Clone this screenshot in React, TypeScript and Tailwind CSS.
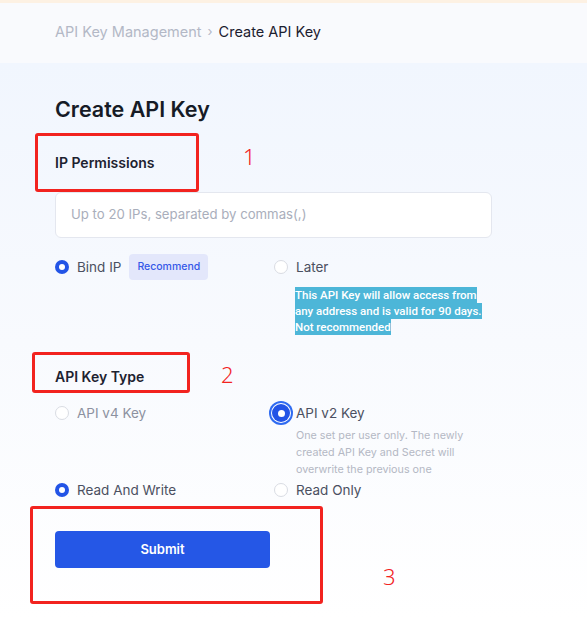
import React from "react";

const Radio = ({ checked, focus }: { checked?: boolean; focus?: boolean }) => (
  <span
    className={`relative flex items-center justify-center rounded-full shrink-0 ${
      focus ? "w-[18px] h-[18px] ring-2 ring-[#2f6bf1] ring-offset-[1px]" : "w-[14px] h-[14px]"
    } ${checked ? "bg-[#2354e6]" : "bg-white border border-[#d9dce3]"}`}
  >
    {checked && <span className={`rounded-full bg-white ${focus ? "w-[7px] h-[7px]" : "w-[6px] h-[6px]"}`} />}
  </span>
);

const Mark = ({ n, className }: { n: string; className: string }) => (
  <span className={`absolute text-[22px] leading-none text-[#f2231f] font-['Noto_Sans',sans-serif] font-light ${className}`}>
    {n}
  </span>
);

export default function App() {
  return (
    <div className="relative w-[587px] h-[618px] overflow-hidden bg-white font-['Inter',sans-serif]">
      <div className="h-[3px] bg-[#fdf1e3]" />
      <div className="h-[60px] bg-[#f9fafd] flex items-center pl-[55px] text-[14.5px] pb-[2px]">
        <span className="text-[#b3b8c6]">API Key Management</span>
        <span className="text-[#b3b8c6] mx-[6px] text-[13px]">›</span>
        <span className="text-[#1c2030]">Create API Key</span>
      </div>

      <div className="h-[555px] bg-gradient-to-b from-[#f1f6fe] via-[#f8fafe] to-white pl-[55px]">
        <h1 className="pt-[32px] text-[21.5px] font-semibold text-[#161b26] leading-[28px]">Create API Key</h1>

        <h2 className="mt-[30px] text-[14px] font-semibold text-[#1d2230] leading-[20px]">IP Permissions</h2>

        <div className="mt-[19px] w-[437px] h-[46px] rounded-[6px] border border-[#e4e7ef] bg-white flex items-center pl-[15px] text-[13.2px] text-[#a9aebb]">
          Up to 20 IPs, separated by commas(,)
        </div>

        <div className="mt-[16px] flex">
          <div className="w-[219px] flex items-start">
            <div className="flex items-center gap-[8px] h-[26px]">
              <Radio checked />
              <span className="text-[13.5px] text-[#4b5061]">Bind IP</span>
              <span className="h-[26px] px-[8px] flex items-center rounded-[4px] bg-[#e3e7fb] text-[#3458e8] text-[10.5px] font-medium">
                Recommend
              </span>
            </div>
          </div>
          <div>
            <div className="flex items-center gap-[8px] h-[26px]">
              <Radio />
              <span className="text-[13.5px] text-[#4b5061]">Later</span>
            </div>
            <div className="mt-[7px] ml-[21px] w-[194px] text-[11.5px] leading-[16px] font-medium text-white font-['Roboto',sans-serif]">
              <span className="bg-[#4db6d8] [box-decoration-break:clone] py-[1px]">
                This API Key will allow access from any address and is valid for 90 days. Not recommended
              </span>
            </div>
          </div>
        </div>

        <h2 className="mt-[32px] text-[14px] font-semibold text-[#1d2230] leading-[20px]">API Key Type</h2>

        <div className="mt-[16px] flex">
          <div className="w-[217px] flex items-center gap-[8px] h-[20px]">
            <Radio />
            <span className="text-[13.5px] text-[#8c91a0]">API v4 Key</span>
          </div>
          <div>
            <div className="flex items-center gap-[6px] h-[20px]">
              <Radio checked focus />
              <span className="text-[13.5px] text-[#4b5061]">API v2 Key</span>
            </div>
            <p className="mt-[4px] ml-[24px] w-[178px] text-[10.75px] leading-[17px] text-[#b4b8c4]">
              One set per user only. The newly created API Key and Secret will overwrite the previous one
            </p>
          </div>
        </div>

        <div className="mt-[2px] flex">
          <div className="w-[219px] flex items-center gap-[8px] h-[20px]">
            <Radio checked />
            <span className="text-[13.5px] text-[#4b5061]">Read And Write</span>
          </div>
          <div className="flex items-center gap-[8px] h-[20px]">
            <Radio />
            <span className="text-[13.5px] text-[#4b5061]">Read Only</span>
          </div>
        </div>

        <button className="mt-[31px] w-[215px] h-[37px] rounded-[4px] bg-[#2557e6] text-white text-[13px] font-semibold">
          Submit
        </button>
      </div>

      <div className="absolute left-[35px] top-[133px] w-[164px] h-[59px] border-[3px] border-[#f2231f] rounded-[3px]" />
      <Mark n="1" className="left-[243px] top-[145px]" />
      <div className="absolute left-[32px] top-[352px] w-[158px] h-[41px] border-[3px] border-[#f2231f] rounded-[3px]" />
      <Mark n="2" className="left-[221px] top-[363px]" />
      <div className="absolute left-[30px] top-[506px] w-[293px] h-[98px] border-[3px] border-[#f2231f] rounded-[3px]" />
      <Mark n="3" className="left-[383px] top-[565px]" />
    </div>
  );
}
